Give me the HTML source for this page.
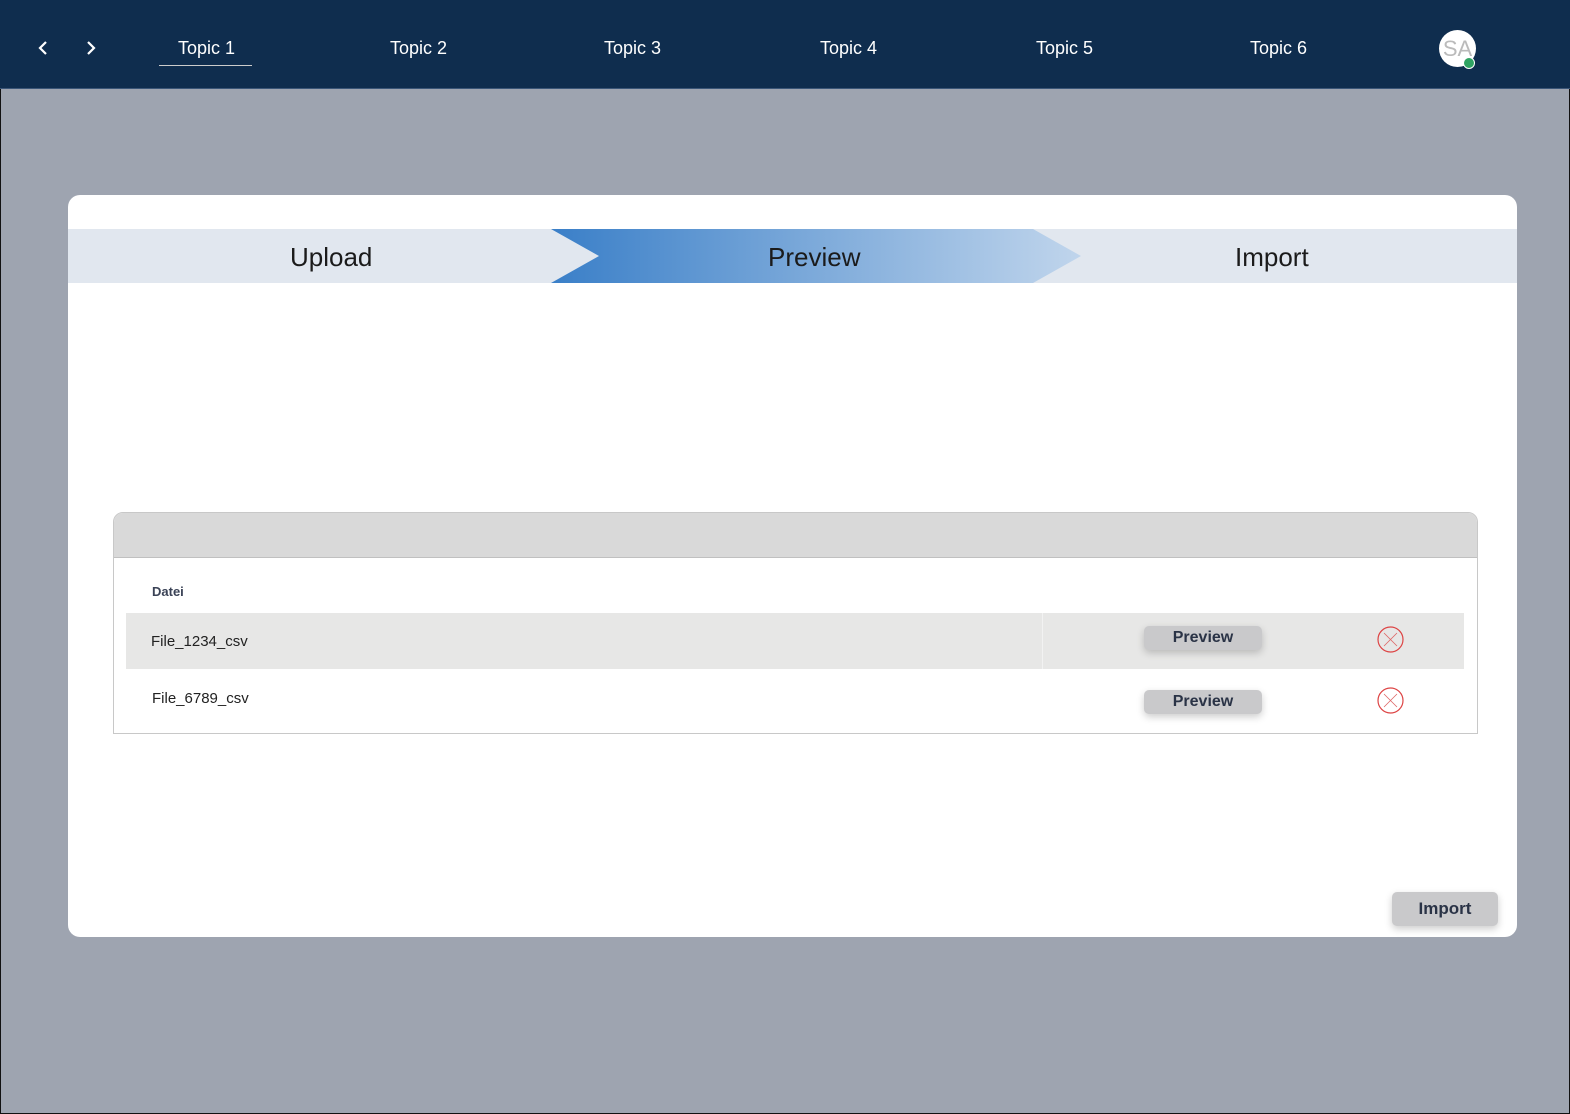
<!DOCTYPE html>
<html><head><style>
*{margin:0;padding:0;box-sizing:border-box}
body{width:1570px;height:1114px;background:#9ea4b0;font-family:"Liberation Sans",sans-serif;position:relative;overflow:hidden;border:1px solid #111}
.nav{position:absolute;left:-1px;top:-1px;width:1570px;height:89px;background:#0f2d4e;border-bottom:1px solid #3b5678}
.nav .t{position:absolute;top:38px;color:#fff;font-size:18px}
.card{position:absolute;left:67px;top:194px;width:1449px;height:742px;background:#fff;border-radius:12px;overflow:hidden}
.st{position:absolute;top:34px;height:54px;left:0;width:1449px;background:#e1e7ef}
.st span{position:absolute;top:13px;font-size:26px;color:#1b1b1b}
.tbl{position:absolute;left:45px;top:317px;width:1365px;height:222px;border:1px solid #c8c8c8;border-radius:10px 10px 0 0;overflow:hidden}
.hd{height:45px;background:#d9d9d9;border-bottom:1px solid #c0c0c0}
.btn{position:absolute;width:118px;height:24px;background:#c9c9cb;border-radius:5px;box-shadow:0 3px 8px rgba(0,0,0,.2);color:#2a3346;font-weight:bold;font-size:16px;text-align:center;line-height:24px}
.x{position:absolute;width:27px;height:27px}
</style></head><body>
<div class="nav">
<svg style="position:absolute;left:36px;top:40px" width="14" height="16"><path d="M10 2L4 8l6 6" stroke="#fff" stroke-width="2.2" fill="none"/></svg>
<svg style="position:absolute;left:84px;top:40px" width="14" height="16"><path d="M4 2l6 6-6 6" stroke="#fff" stroke-width="2.2" fill="none"/></svg>
<span class="t" style="left:178px">Topic 1</span>
<div style="position:absolute;left:159px;top:65px;width:93px;height:1px;background:#ccc"></div>
<span class="t" style="left:390px">Topic 2</span>
<span class="t" style="left:604px">Topic 3</span>
<span class="t" style="left:820px">Topic 4</span>
<span class="t" style="left:1036px">Topic 5</span>
<span class="t" style="left:1250px">Topic 6</span>
<div style="position:absolute;left:1439px;top:30px;width:37px;height:37px;border-radius:50%;background:#fff;color:#bbb;font-size:22px;text-align:center;line-height:37px">SA</div>
<div style="position:absolute;left:1463px;top:57px;width:12px;height:12px;border-radius:50%;background:#2fa362;border:1.5px solid #fff"></div>
</div>
<div class="card">
<div class="st">
<svg style="position:absolute;left:483px;top:0" width="531" height="54"><defs><linearGradient id="g"><stop offset="0" stop-color="#3a7fc8"/><stop offset="1" stop-color="#c0d5ec"/></linearGradient></defs><path d="M0 0H482L530 27 482 54H0L48 27Z" fill="url(#g)"/></svg>
<span style="left:222px">Upload</span>
<span style="left:700px">Preview</span>
<span style="left:1167px">Import</span>
</div>
<div class="tbl">
<div class="hd"></div>
<div style="position:absolute;left:38px;top:71px;font-size:13px;font-weight:bold;color:#3a4256">Datei</div>
<div style="position:absolute;left:12px;top:100px;width:1338px;height:56px;background:#e7e7e6"></div>
<div style="position:absolute;left:928px;top:100px;width:1px;height:56px;background:#f2f2f2"></div>
<div style="position:absolute;left:37px;top:120px;font-size:15px;color:#222">File_1234_csv</div>
<div style="position:absolute;left:38px;top:177px;font-size:15px;color:#222">File_6789_csv</div>
<div class="btn" style="left:1030px;top:113px">Preview</div>
<div class="btn" style="left:1030px;top:177px">Preview</div>
<svg class="x" style="left:1263px;top:113px" viewBox="0 0 27 27"><circle cx="13.5" cy="13.5" r="12.5" fill="none" stroke="#d44" stroke-width="1.2"/><path d="M7 7l13 13M20 7L7 20" stroke="#d66" stroke-width=".8"/></svg>
<svg class="x" style="left:1263px;top:174px" viewBox="0 0 27 27"><circle cx="13.5" cy="13.5" r="12.5" fill="none" stroke="#d44" stroke-width="1.2"/><path d="M7 7l13 13M20 7L7 20" stroke="#d66" stroke-width=".8"/></svg>
</div>
<div class="btn" style="left:1324px;top:697px;width:106px;height:34px;line-height:34px;font-size:17px">Import</div>
</div>
</body></html>
